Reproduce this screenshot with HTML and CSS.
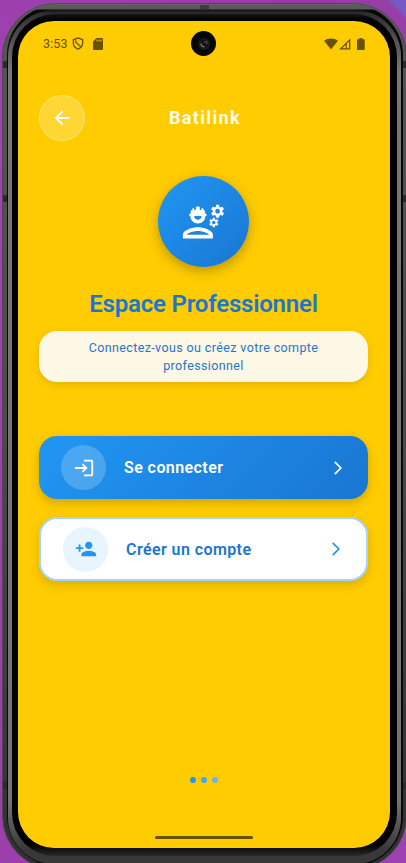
FILE: index.html
```html
<!DOCTYPE html>
<html lang="fr">
<head>
<meta charset="utf-8">
<meta name="viewport" content="width=device-width, initial-scale=1">
<title>Batilink</title>
<link rel="stylesheet" href="styles.css">
</head>
<body>
<div class="phone">
  <div class="groove">
    <div class="rim">
      <div class="bezel">
        <main class="screen">
          <div class="status">
            <span class="time">3:53</span>
            <svg class="shield" viewBox="0 0 12 14"><path d="M6 1 11 2.800V6.500C11 9.800 9 12 6 13 3 12 1 9.800 1 6.500V2.800Z" fill="none" stroke="currentColor" stroke-width="1.400"/><path d="M3.600 2.500V5.500L9 10.500" fill="none" stroke="currentColor" stroke-width="1.300"/></svg>
            <svg class="sd" viewBox="0 0 10 12"><path fill="currentColor" fill-rule="evenodd" d="M3.500 0H9q1 0 1 1v10q0 1-1 1H1q-1 0-1-1V3.500ZM3.600 1.600v2h1v-2Zm2 0v2h1v-2Zm2 0v2h1v-2Z"/></svg>
            <span class="signals">
              <svg class="wifi" viewBox="0 0 14 12"><path fill="currentColor" d="M7 11.500 0 2.800Q3 .4 7 .4t7 2.400Z"/></svg>
              <svg class="cell" viewBox="0 0 12 12"><path fill="currentColor" fill-rule="evenodd" d="M11.300.4v11.200H0ZM10 3.400 7.800 5.600V10.300H10ZM6.700 6.800 3.200 10.300H6.700Z"/></svg>
              <svg class="battery" viewBox="0 0 8 12"><path fill="currentColor" d="M2.300 0h3v1.200H7q.7 0 .7.7v9.300q0 .7-.7.7H.7Q0 11.900 0 11.200V1.900q0-.7.7-.7h1.600Z"/></svg>
            </span>
            <span class="camera"><svg viewBox="0 0 10 10"><circle cx="5" cy="5" r="4.500" fill="#141416" stroke="#24262a" stroke-width=".8"/><path d="M2.300 4.500Q2.600 7.200 5.500 7.500" fill="none" stroke="#8a7c6c"/><path d="M5 3.600 7.300 2.800V5.200" fill="none" stroke="#5c4058"/></svg></span>
          </div>
          <header class="appbar">
            <button class="back" aria-label="Retour"><svg viewBox="0 0 24 24"><path d="M20 11H7.830l5.590-5.590L12 4l-8 8 8 8 1.410-1.410L7.830 13H20v-2z"/></svg></button>
            <span class="brand">Batilink</span>
          </header>
          <div class="logo">
            <svg viewBox="0 0 24 24"><path d="M9 15c-2.670 0-8 1.340-8 4v2h16v-2c0-2.660-5.330-4-8-4zm-6 4c.22-.72 3.310-2 6-2 2.700 0 5.800 1.290 6 2H3zM4.740 9H5c0 2.210 1.790 4 4 4s4-1.790 4-4h.26c.27 0 .49-.22.49-.49v-.02c0-.27-.22-.49-.49-.49H13c0-1.480-.81-2.750-2-3.450v.95c0 .28-.22.5-.5.5s-.5-.22-.5-.5V4.140C9.680 4.060 9.350 4 9 4s-.68.06-1 .14V5.500c0 .28-.22.5-.5.5S7 5.780 7 5.500v-.95C5.810 5.250 5 6.520 5 8h-.26c-.27 0-.49.22-.49.49v.03c0 .26.22.48.49.48zM11 9c0 1.100-.9 2-2 2s-2-.9-2-2h4zM21.980 6.230l.93-.83-.75-1.300-1.190.39c-.14-.11-.3-.2-.47-.27L20.250 3h-1.500l-.25 1.220c-.17.07-.33.16-.48.27l-1.180-.39-.75 1.300.93.83c-.02.17-.02.35 0 .52l-.93.85.75 1.300 1.200-.38c.13.1.28.18.43.25l.28 1.230h1.500l.27-1.220c.16-.07.3-.15.44-.25l1.190.38.75-1.300-.93-.85c.03-.19.02-.36 0-.53zM19.500 7.750c-.69 0-1.250-.56-1.250-1.250s.56-1.250 1.250-1.250 1.250.56 1.250 1.250-.56 1.250-1.250 1.250zM19.400 10.790l-.85.28c-.1-.08-.21-.14-.33-.19l-.18-.88h-1.070l-.18.87c-.12.05-.24.12-.34.19l-.84-.28-.54.93.66.59c-.01.13-.01.25 0 .37l-.66.61.54.93.86-.27c.1.07.2.13.31.18l.18.88h1.070l.19-.87c.11-.05.22-.11.32-.18l.85.27.54-.93-.66-.61c.01-.13.01-.25 0-.37l.66-.59-.53-.93zm-1.900 2.600c-.49 0-.89-.4-.89-.89s.4-.89.89-.89.89.4.89.89-.4.89-.89.89z"/></svg>
          </div>
          <h1 class="title">Espace Professionnel</h1>
          <p class="subtitle">Connectez-vous ou créez votre compte professionnel</p>
          <div class="actions">
            <button class="action primary">
              <span class="disc"><svg viewBox="0 0 24 24"><path d="M11 7L9.600 8.400l2.600 2.600H2v2h10.200l-2.600 2.600L11 17l5-5-5-5zm9 12h-8v2h8c1.100 0 2-.9 2-2V5c0-1.100-.9-2-2-2h-8v2h8v14z"/></svg></span>
              <span class="label">Se connecter</span>
              <svg class="chevron" viewBox="0 0 24 24"><path d="M6.230 20.230L8 22l10-10L8 2 6.230 3.770 14.460 12z"/></svg>
            </button>
            <button class="action secondary">
              <span class="disc"><svg viewBox="0 0 24 24"><path d="M15 12c2.210 0 4-1.790 4-4s-1.790-4-4-4-4 1.790-4 4 1.790 4 4 4zm-9-2V7H4v3H1v2h3v3h2v-3h3v-2H6zm9 4c-2.670 0-8 1.340-8 4v2h16v-2c0-2.660-5.330-4-8-4z"/></svg></span>
              <span class="label">Créer un compte</span>
              <svg class="chevron" viewBox="0 0 24 24"><path d="M6.230 20.230L8 22l10-10L8 2 6.230 3.770 14.460 12z"/></svg>
            </button>
          </div>
          <div class="dots"><i></i><i></i><i></i></div>
          <div class="home"></div>
        </main>
      </div>
    </div>
  </div>
</div>
</body>
</html>
```
FILE: styles.css
```css
* { box-sizing: border-box; }
html, body { margin: 0; height: 863px; overflow: hidden; }
body {
  padding: 3px 0 0 2px;
  font-family: Roboto, sans-serif;
  background: linear-gradient(225deg, #7559c4 0 12px, #963fa7 13px, #963ba3 60px, #a043b3 400px, #9c3fac);
}
svg { display: block; fill: currentColor; }
button { font: inherit; border: 0; cursor: pointer; }

/* Handset shell, from the outer edge inwards; the dark notches are antenna lines */
.phone {
  width: 405px;
  height: 867px;
  padding: 1px 3px 3px 4px;
  border: 1px solid #4a4a4a;
  border-radius: 54px;
  background:
    linear-gradient(#2a2a2a, #2a2a2a) 0 57px / 100% 7px no-repeat,
    linear-gradient(#2a2a2a, #2a2a2a) 0 191px / 100% 7px no-repeat,
    linear-gradient(#2a2a2a, #2a2a2a) 0 778px / 100% 7px no-repeat,
    linear-gradient(#666, #555 12px, #4a4a4a 50%, #303030);
}
.groove {
  height: 100%;
  padding: 5px 2px 2px 1px;
  border-radius: 50px;
  background:
    linear-gradient(#3c3c3c, #3c3c3c) 193px 0 / 9px 4px no-repeat,
    linear-gradient(#5a5a5a 0 4px, #080808 5px);
}
.rim {
  height: 100%;
  padding: 4px 4px 8px;
  border-radius: 46px;
  background: linear-gradient(#161616, #303030 4px, #777 60px, #747474 790px, #383838 840px);
}
.bezel {
  height: 100%;
  padding: 7px 7px 0 6px;
  border-radius: 43px;
  background: linear-gradient(#151515, #000 6px, #000 830px, #292929);
}

.screen {
  position: relative;
  display: flex;
  flex-direction: column;
  width: 372px;
  height: 827px;
  padding: 0 22px 0 21px;
  border-radius: 36px;
  background: #ffcc02;
}

.status {
  display: flex;
  align-items: center;
  height: 45px;
  padding-left: 4px;
  color: #665200;
}
.time { width: 29px; font-size: 12.5px; letter-spacing: .1px; }
.shield { width: 12px; height: 13px; }
.sd { width: 10px; height: 12px; margin-left: 9px; }
.signals { display: flex; align-items: center; margin-left: auto; margin-right: 3px; }
.wifi { width: 14px; height: 12px; }
.cell { width: 12px; height: 12px; margin-left: 1px; }
.battery { width: 8px; height: 12px; margin-left: 6px; }
.camera {
  position: absolute;
  left: 173px;
  top: 10px;
  display: grid;
  place-items: center;
  width: 25px;
  height: 25px;
  border-radius: 50%;
  background: #050505;
}
.camera svg { width: 12px; height: 12px; }

.appbar {
  display: grid;
  grid-template-columns: 46px 1fr 43px;
  align-items: center;
  height: 46px;
  margin-top: 29px;
}
.back {
  display: grid;
  place-items: center;
  width: 46px;
  height: 46px;
  padding: 0;
  border: 1px solid rgba(255, 255, 255, .3);
  border-radius: 50%;
  background: rgba(255, 255, 255, .2);
  color: #fff;
}
.back svg { width: 22px; height: 22px; }
.brand {
  padding-bottom: 2px;
  text-align: center;
  color: #fffbea;
  font-size: 18px;
  font-weight: 700;
  letter-spacing: 1.35px;
}

.logo {
  display: grid;
  place-items: center;
  align-self: center;
  width: 91px;
  height: 91px;
  margin-top: 35px;
  padding-bottom: 1px;
  border-radius: 50%;
  color: #fff;
  background: linear-gradient(135deg, #2196f3, #1976d2);
  box-shadow: 0 4px 12px rgba(90, 72, 0, .4);
}
.logo svg { width: 45px; height: 45px; }

.title {
  margin: 22px 0 0;
  height: 30px;
  line-height: 30px;
  text-align: center;
  white-space: nowrap;
  color: #1976d2;
  font-size: 24px;
  font-weight: 600;
  letter-spacing: -.2px;
}
.subtitle {
  height: 51px;
  margin: 12px 0 0;
  padding: 8px 40px;
  border-radius: 18px;
  background: #fcf8e5;
  box-shadow: 0 3px 7px rgba(90, 72, 0, .16);
  text-align: center;
  color: #2474cc;
  font-size: 12.5px;
  font-weight: 450;
  line-height: 18px;
  letter-spacing: .38px;
}

.actions { display: flex; flex-direction: column; gap: 18px; margin-top: 54px; }
.action {
  display: flex;
  align-items: center;
  height: 63px;
  padding: 0 22px;
  border-radius: 18px;
  text-align: left;
  font-size: 16px;
  font-weight: 600;
  letter-spacing: .42px;
}
.primary {
  color: #fff;
  background: linear-gradient(135deg, #2196f3, #1976d2);
  box-shadow: 0 4px 10px rgba(90, 72, 0, .28);
}
.secondary {
  height: 64px;
  border: 2px solid #a6d5fa;
  color: #1976d2;
  background: #fff;
  box-shadow: 0 4px 10px rgba(90, 72, 0, .22);
}
.disc {
  display: grid;
  place-items: center;
  width: 45px;
  height: 45px;
  border-radius: 50%;
  background: rgba(255, 255, 255, .2);
}
.disc svg { width: 22px; height: 22px; }
.secondary .disc { background: #e8f4fe; color: #2196f3; }
.label { flex: 1; margin-left: 18px; }
.chevron { width: 16px; height: 16px; }
.secondary .chevron { color: #2196f3; }

.dots { display: flex; justify-content: center; gap: 5px; margin-top: 196px; }
.dots i { width: 6px; height: 6px; border-radius: 50%; background: #2196f3; }
.dots i:nth-child(2) { background: #42a5f5; }
.dots i:nth-child(3) { background: #64b5f6; }
.home {
  align-self: center;
  width: 98px;
  height: 3px;
  margin-top: 53px;
  border-radius: 2px;
  background: #665200;
}
```
